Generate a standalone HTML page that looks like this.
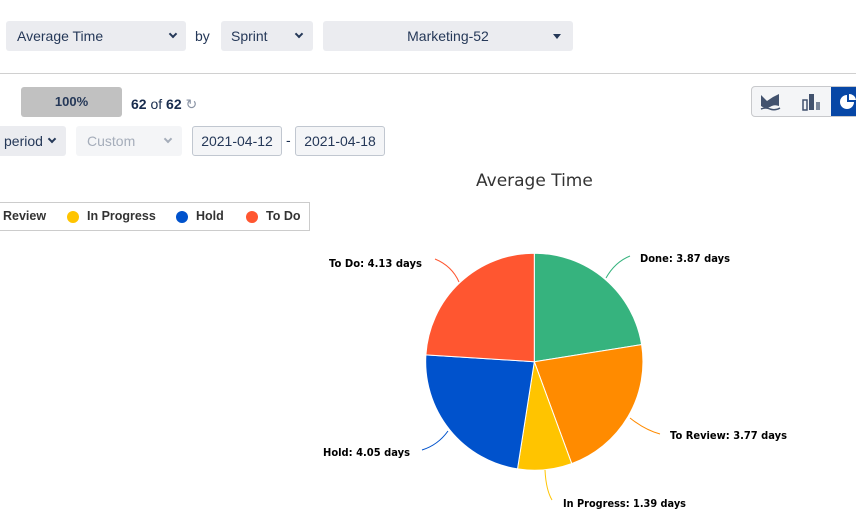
<!DOCTYPE html>
<html><head><meta charset="utf-8"><style>
*{box-sizing:border-box;margin:0;padding:0}
body{width:856px;height:529px;overflow:hidden;background:#fff;font-family:"Liberation Sans",Arial,sans-serif;color:#172b4d;position:relative}
.abs{position:absolute}
.sel{position:absolute;background:#ebecf0;border-radius:3px;font-size:14px;color:#253858;height:30px;line-height:30px}
.chev{position:absolute;width:6px;height:6px;border-right:2px solid #253858;border-bottom:2px solid #253858;transform:rotate(45deg)}
</style></head><body>
<div class="sel" style="left:6px;top:21px;width:180px;padding-left:11px">Average Time<span class="chev" style="left:164px;top:10px"></span></div>
<div class="abs" style="left:195px;top:21px;line-height:30px;font-size:14px;color:#253858">by</div>
<div class="sel" style="left:221px;top:21px;width:92px;padding-left:10px">Sprint<span class="chev" style="left:75px;top:10px"></span></div>
<div class="sel" style="left:323px;top:21px;width:250px;text-align:center">Marketing-52<span class="abs" style="left:230px;top:13px;border-left:4px solid transparent;border-right:4px solid transparent;border-top:5px solid #253858"></span></div>
<div class="abs" style="left:0;top:73px;width:856px;height:1px;background:#d0d0d0"></div>
<div class="abs" style="left:21px;top:87px;width:101px;height:30px;background:#c1c1c1;border-radius:3px;text-align:center;line-height:30px;font-size:13px;font-weight:bold;color:#253858">100%</div>
<div class="abs" style="left:131px;top:96px;font-size:14px;color:#172b4d"><b>62</b> of <b>62</b> <span style="color:#8993a4">↻</span></div>
<div class="abs" style="left:751px;top:86px;width:110px;height:31px;border:1px solid #c8c9cc;border-radius:4px;background:#f4f5f7;overflow:hidden">
<svg class="abs" style="left:8px;top:6px" width="22" height="18" viewBox="0 0 22 18"><path d="M1 2 L7 8 L13 4 L19 1 L19 13 Q14 11 10 14 Q5 16 1 13Z" fill="#42526e"/><path d="M1 16 Q6 14 10 16 Q15 18 20 15" stroke="#42526e" stroke-width="1.5" fill="none"/></svg>
<svg class="abs" style="left:50px;top:5px" width="20" height="20" viewBox="0 0 20 20"><rect x="1" y="8" width="4" height="10" fill="none" stroke="#42526e" stroke-width="1.5"/><rect x="7" y="2" width="5" height="16" fill="#42526e"/><rect x="14" y="10" width="4" height="8" fill="#7a869a"/></svg>
<div class="abs" style="left:79px;top:-1px;width:40px;height:32px;background:#0747a6"><svg class="abs" style="left:8px;top:7px" width="18" height="18" viewBox="0 0 18 18"><path d="M8 2 A7 7 0 1 0 15 9 L8 9Z" fill="#fff"/><path d="M10 1 A7 7 0 0 1 17 7 L10 7Z" fill="#fff"/></svg></div>
</div>
<div class="sel" style="left:-10px;top:126px;width:76px;height:30px;padding-left:14px">period<span class="chev" style="left:59px;top:10px"></span></div>
<div class="sel" style="left:76px;top:126px;width:106px;height:30px;padding-left:11px;color:#a5adba;background:#f4f5f7">Custom<span class="chev" style="left:89px;top:10px;border-color:#a5adba"></span></div>
<div class="abs" style="left:192px;top:126px;width:90px;height:30px;border:1px solid #c1c7d0;border-radius:3px;background:#f4f5f7;text-align:center;line-height:28px;font-size:14px;color:#253858">2021-04-12</div>
<div class="abs" style="left:286px;top:132px;font-size:14px">-</div>
<div class="abs" style="left:295px;top:126px;width:90px;height:30px;border:1px solid #c1c7d0;border-radius:3px;background:#f4f5f7;text-align:center;line-height:28px;font-size:14px;color:#253858">2021-04-18</div>
<div class="abs" style="left:476px;top:171px;color:#333;font-family:'DejaVu Sans',sans-serif;font-size:17px">Average Time</div>
<div class="abs" style="left:-5px;top:202px;width:315px;height:29px;border:1px solid #ccc;font-size:12.5px;font-weight:bold;color:#333;line-height:27px;white-space:nowrap">
<span class="abs" style="left:7px">Review</span>
<span class="abs" style="left:71px;top:8px;width:12px;height:12px;border-radius:50%;background:#ffc400"></span><span class="abs" style="left:91px">In Progress</span>
<span class="abs" style="left:180px;top:8px;width:12px;height:12px;border-radius:50%;background:#0052cc"></span><span class="abs" style="left:200px">Hold</span>
<span class="abs" style="left:250px;top:8px;width:12px;height:12px;border-radius:50%;background:#ff5630"></span><span class="abs" style="left:270px">To Do</span>
</div>
<svg class="abs" style="left:0;top:0" width="856" height="529" font-family="'DejaVu Sans',sans-serif" font-size="11" font-weight="bold">
<g stroke="#fff" stroke-width="1">
<path d="M534.3 361.7 L534.3 253.2 A108.5 108.5 0 0 1 641.6 344.6Z" fill="#36b37e"/>
<path d="M534.3 361.7 L641.6 344.6 A108.5 108.5 0 0 1 571.7 463.6Z" fill="#ff8b00"/>
<path d="M534.3 361.7 L571.7 463.6 A108.5 108.5 0 0 1 517.5 468.9Z" fill="#ffc400"/>
<path d="M534.3 361.7 L517.5 468.9 A108.5 108.5 0 0 1 425.9 354.9Z" fill="#0052cc"/>
<path d="M534.3 361.7 L425.9 354.9 A108.5 108.5 0 0 1 534.3 253.2Z" fill="#ff5630"/>
</g>
<g fill="none" stroke-width="1">
<path d="M606 278 Q615 262 630 256" stroke="#36b37e"/>
<path d="M630 418 Q645 430 660 434" stroke="#ff8b00"/>
<path d="M545 470 Q546 490 552 500" stroke="#ffc400"/>
<path d="M448 431 Q438 445 422 450" stroke="#0052cc"/>
<path d="M459 282 Q452 266 435 259" stroke="#ff5630"/>
</g>
<g fill="#000">
<text x="640" y="262" textLength="90" lengthAdjust="spacingAndGlyphs">Done: 3.87 days</text>
<text x="670" y="439" textLength="117" lengthAdjust="spacingAndGlyphs">To Review: 3.77 days</text>
<text x="563" y="507" textLength="123" lengthAdjust="spacingAndGlyphs">In Progress: 1.39 days</text>
<text x="323" y="456" textLength="87" lengthAdjust="spacingAndGlyphs">Hold: 4.05 days</text>
<text x="329" y="267" textLength="93" lengthAdjust="spacingAndGlyphs">To Do: 4.13 days</text>
</g>
</svg>
</body></html>
